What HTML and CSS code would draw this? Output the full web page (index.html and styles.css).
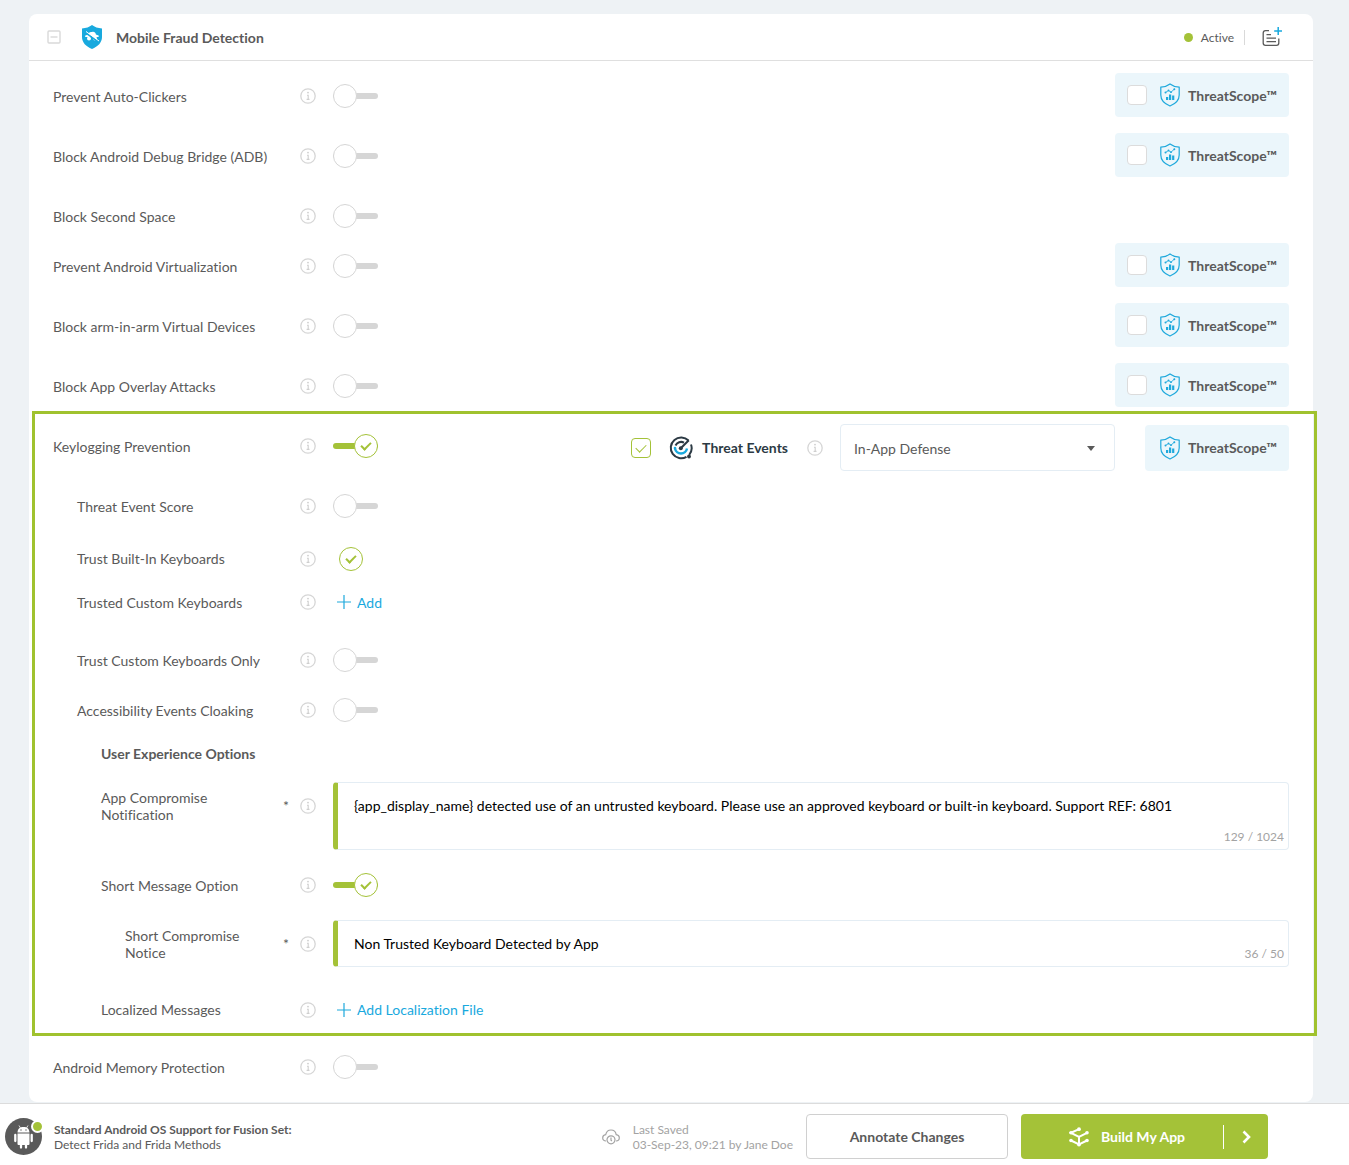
FILE: index.html
```html
<!DOCTYPE html>
<html lang="en">
<head>
  <meta charset="UTF-8" />
  <meta name="viewport" content="width=device-width, initial-scale=1.0"/>
  <title>Mobile Fraud Detection</title>
  <link rel="stylesheet" href="styles.css">
</head>
<body>

<!-- shared icons -->
<svg class="sprite" aria-hidden="true">
  <symbol id="info" viewBox="0 0 16 16">
    <circle cx="8" cy="8" r="7.200" fill="none" stroke="#d6d6d6" stroke-width="1.3"/>
    <circle cx="8" cy="4.600" r="0.900" fill="#cfcfcf"/>
    <path d="M7 7.2h1.200v4M6.600 11.400h2.900" fill="none" stroke="#cfcfcf" stroke-width="1.1"/>
  </symbol>
  <symbol id="scope" viewBox="0 0 20 24">
    <path d="M10 1C7.600 2.900 4.400 4 .8 4.200V12c0 5.200 3.800 8.800 9.200 11 5.400-2.200 9.200-5.800 9.200-11V4.200C15.600 4 12.400 2.900 10 1z" fill="none" stroke="#1fa9dc" stroke-width="1.200"/>
    <path d="M5.500 9.500l3-2 2.500 1.700 3.500-3.200" fill="none" stroke="#1fa9dc" stroke-width="0.900"/>
    <circle cx="5.500" cy="9.500" r="1" fill="#1fa9dc"/><circle cx="8.500" cy="7.500" r="0.900" fill="#1fa9dc"/><circle cx="11" cy="9.200" r="0.900" fill="#1fa9dc"/><circle cx="14.300" cy="6.300" r="1" fill="#1fa9dc"/>
    <path d="M6 14h2.200v3H6zM9 11.500h2.200V17H9zM12.100 12.500h2.200V17h-2.200z" fill="#1fa9dc"/>
  </symbol>
  <symbol id="plus" viewBox="0 0 14 14">
    <path d="M7 0v14M0 7h14" stroke="#1fa9dc" stroke-width="1.200"/>
  </symbol>
</svg>

<main class="card">
  <header class="card-header">
    <button class="icon-btn" aria-label="Collapse">
      <svg width="14" height="14" viewBox="0 0 14 14" fill="none" stroke="#d9d9d9" stroke-width="1.4"><rect x="1" y="1" width="12" height="12" rx="1"/><path d="M3.500 7h7"/></svg>
    </button>
    <svg class="shield" width="22" height="24" viewBox="0 0 22 24">
      <path d="M11 0C8.500 2 5 3.200 1 3.500V12c0 5.500 4 9.500 10 12 6-2.500 10-6.500 10-12V3.500C17 3.200 13.500 2 11 0z" fill="#18a9de"/>
      <path d="M7.200 9.500C7.500 7.500 9 6.600 11 7c2-.5 3.600.3 3.900 2.400l2.600 1.200c.8.500.4 1.200-.5 1.400H5c-1.300-.2-1.400-1-.5-1.500z" fill="#fff"/>
      <circle cx="8" cy="13.600" r="2" fill="#fff"/><circle cx="14" cy="13.600" r="2" fill="#fff"/>
      <path d="M4.500 7.500l13 9.500" stroke="#18a9de" stroke-width="1.800"/>
      <path d="M5 6.500l13 9.500" stroke="#fff" stroke-width="1"/>
    </svg>
    <h1>Mobile Fraud Detection</h1>
    <span class="status">Active</span>
    <button class="icon-btn note-btn" aria-label="Add note">
      <svg width="20" height="20" viewBox="0 0 20 20" fill="none" stroke="#5a5a5a" stroke-width="1.300">
        <path d="M7 3.700H3.500Q1.200 3.700 1.200 6v10q0 2.300 2.300 2.300h11q2.300 0 2.300-2.300v-4.500M4.500 7.600h4.500M4.500 11.200h9.500M4.500 14.700h9.500"/>
        <path d="M16.200 0v8M12.200 4h8" stroke="#18a9de" stroke-width="1.500"/>
      </svg>
    </button>
  </header>

  <div class="rows">
    <div class="row">
      <div class="name"><label for="clickers">Prevent Auto-Clickers</label></div>
      <svg class="info"><use href="#info"/></svg>
      <input type="checkbox" class="toggle" id="clickers">
      <label class="scope"><input type="checkbox" class="tick"><svg><use href="#scope"/></svg>ThreatScope™</label>
    </div>
    <div class="row">
      <div class="name"><label for="adb">Block Android Debug Bridge (ADB)</label></div>
      <svg class="info"><use href="#info"/></svg>
      <input type="checkbox" class="toggle" id="adb">
      <label class="scope"><input type="checkbox" class="tick"><svg><use href="#scope"/></svg>ThreatScope™</label>
    </div>
    <div class="row row-short">
      <div class="name"><label for="space">Block Second Space</label></div>
      <svg class="info"><use href="#info"/></svg>
      <input type="checkbox" class="toggle" id="space">
    </div>
    <div class="row">
      <div class="name"><label for="virt">Prevent Android Virtualization</label></div>
      <svg class="info"><use href="#info"/></svg>
      <input type="checkbox" class="toggle" id="virt">
      <label class="scope"><input type="checkbox" class="tick"><svg><use href="#scope"/></svg>ThreatScope™</label>
    </div>
    <div class="row">
      <div class="name"><label for="arm">Block arm-in-arm Virtual Devices</label></div>
      <svg class="info"><use href="#info"/></svg>
      <input type="checkbox" class="toggle" id="arm">
      <label class="scope"><input type="checkbox" class="tick"><svg><use href="#scope"/></svg>ThreatScope™</label>
    </div>
    <div class="row">
      <div class="name"><label for="overlay">Block App Overlay Attacks</label></div>
      <svg class="info"><use href="#info"/></svg>
      <input type="checkbox" class="toggle" id="overlay">
      <label class="scope"><input type="checkbox" class="tick"><svg><use href="#scope"/></svg>ThreatScope™</label>
    </div>

    <section class="highlight">
      <div class="row">
        <div class="name"><label for="keylog">Keylogging Prevention</label></div>
        <svg class="info"><use href="#info"/></svg>
        <input type="checkbox" class="toggle" id="keylog" checked>
        <div class="events">
          <input type="checkbox" class="tick" id="events" checked>
          <svg class="radar" width="24" height="24" viewBox="0 0 24 24" fill="none" stroke="#2c3a44" stroke-width="2">
            <path d="M19.500 4.500A10.400 10.400 0 1 0 17.500 20.800"/>
            <path d="M22 8.500a10.400 10.400 0 0 1-1.800 10.300"/>
            <path d="M6.500 9.500A6.200 6.200 0 0 1 15 6.600M11.500 12.500l8.300-8.300"/>
            <path d="M6 12.500a6.100 6.100 0 0 0 12 0" stroke="#18a9de" stroke-width="2.400"/>
            <circle cx="11.800" cy="12.200" r="2" fill="#2c3a44" stroke="none"/>
            <circle cx="6" cy="12" r="1.300" fill="#18a9de" stroke="none"/>
            <circle cx="20" cy="20.500" r="1.900" fill="#2c3a44" stroke="none"/>
          </svg>
          <label class="events-label" for="events">Threat Events</label>
          <svg class="info"><use href="#info"/></svg>
          <div class="select">
            <select aria-label="Threat Events mode"><option>In-App Defense</option></select>
            <svg width="8" height="5" viewBox="0 0 8 5"><path d="M0 0h8L4 5z" fill="#5a5a5a"/></svg>
          </div>
          <div class="scope scope-plain"><svg><use href="#scope"/></svg>ThreatScope™</div>
        </div>
      </div>
      <div class="row level-1">
        <div class="name"><label for="score">Threat Event Score</label></div>
        <svg class="info"><use href="#info"/></svg>
        <input type="checkbox" class="toggle" id="score">
      </div>
      <div class="row row-builtin level-1">
        <div class="name"><label for="builtin">Trust Built-In Keyboards</label></div>
        <svg class="info"><use href="#info"/></svg>
        <input type="checkbox" class="round" id="builtin" checked>
      </div>
      <div class="row row-add level-1">
        <div class="name">Trusted Custom Keyboards</div>
        <svg class="info"><use href="#info"/></svg>
        <button class="add"><svg><use href="#plus"/></svg>Add</button>
      </div>
      <div class="row row-medium level-1">
        <div class="name"><label for="custom">Trust Custom Keyboards Only</label></div>
        <svg class="info"><use href="#info"/></svg>
        <input type="checkbox" class="toggle" id="custom">
      </div>
      <div class="row row-medium level-1">
        <div class="name"><label for="cloak">Accessibility Events Cloaking</label></div>
        <svg class="info"><use href="#info"/></svg>
        <input type="checkbox" class="toggle" id="cloak">
      </div>
      <h2>User Experience Options</h2>
      <div class="row row-field level-2">
        <div class="name required"><label for="notification">App Compromise Notification</label><span>*</span></div>
        <svg class="info"><use href="#info"/></svg>
        <div class="field">
          <textarea id="notification">{app_display_name} detected use of an untrusted keyboard. Please use an approved keyboard or built-in keyboard. Support REF: 6801</textarea>
          <span class="count">129 / 1024</span>
        </div>
      </div>
      <div class="row row-medium level-2">
        <div class="name"><label for="short">Short Message Option</label></div>
        <svg class="info"><use href="#info"/></svg>
        <input type="checkbox" class="toggle" id="short" checked>
      </div>
      <div class="row row-field level-3">
        <div class="name required"><label for="notice">Short Compromise Notice</label><span>*</span></div>
        <svg class="info"><use href="#info"/></svg>
        <div class="field">
          <input type="text" id="notice" value="Non Trusted Keyboard Detected by App">
          <span class="count">36 / 50</span>
        </div>
      </div>
      <div class="row row-last level-2">
        <div class="name">Localized Messages</div>
        <svg class="info"><use href="#info"/></svg>
        <button class="add"><svg><use href="#plus"/></svg>Add Localization File</button>
      </div>
    </section>

    <div class="row row-medium">
      <div class="name"><label for="memory">Android Memory Protection</label></div>
      <svg class="info"><use href="#info"/></svg>
      <input type="checkbox" class="toggle" id="memory">
    </div>
  </div>
</main>

<footer>
  <div class="avatar">
    <svg width="37" height="37" viewBox="0 0 37 37">
      <circle cx="18.500" cy="18.500" r="18.500" fill="#5a5a5a"/>
      <path d="M12.500 14.500c.2-3.800 2.500-5.500 6-5.500s5.800 1.700 6 5.500zM12.500 15.500h12v10.500q0 1-1 1h-10q-1 0-1-1z" fill="#fff"/>
      <path d="M10.300 17v6M26.700 17v6M16 26v3.500M21 26v3.500" stroke="#fff" stroke-width="2.300" stroke-linecap="round"/>
      <path d="M14 7.500l1.500 2.500M23 7.500L21.500 10" stroke="#fff" stroke-width="0.800"/>
      <circle cx="16" cy="12" r="0.700" fill="#5a5a5a"/><circle cx="21" cy="12" r="0.700" fill="#5a5a5a"/>
    </svg>
    <span class="online"></span>
  </div>
  <p class="set"><strong>Standard Android OS Support for Fusion Set:</strong><br>Detect Frida and Frida Methods</p>
  <svg class="cloud" width="18" height="16" viewBox="0 0 18 16" fill="none" stroke="#a3a3a3" stroke-width="1.200">
    <path d="M4 12C2 12 .7 10.700.7 8.900S2 5.900 3.700 5.700C4.300 2.800 6.300 1 9 1s4.700 1.800 5.200 4.600c1.900.2 3.100 1.500 3.100 3.200S16 12 14 12"/>
    <circle cx="9" cy="10.800" r="4"/><path d="M9 8.600v2.600l.9.800"/>
  </svg>
  <p class="saved">Last Saved<br>03-Sep-23, 09:21 by Jane Doe</p>
  <button class="annotate">Annotate Changes</button>
  <button class="build">
    <svg width="20" height="20" viewBox="0 0 20 20" fill="none" stroke="#fff" stroke-width="2">
      <path d="M10 2.200L2 5.800l8 4 8-4M10 9.800V18M2 13.500l8 4 8-4"/>
      <g fill="#fff" stroke="none"><circle cx="10" cy="2.200" r="1.900"/><circle cx="2" cy="5.800" r="1.800"/><circle cx="18" cy="5.800" r="1.800"/><circle cx="2" cy="13.500" r="1.800"/><circle cx="18" cy="13.500" r="1.800"/><circle cx="10" cy="17.500" r="2"/></g>
    </svg>
    <span class="build-text">Build My App</span>
    <span class="build-arrow"><svg width="9" height="14" viewBox="0 0 9 14" fill="none" stroke="#fff" stroke-width="2.600"><path d="M1.500 1.500L7 7l-5.500 5.500"/></svg></span>
  </button>
</footer>

</body>
</html>
```
FILE: styles.css
```css
*,
*::before,
*::after {
  box-sizing: border-box;
}

body {
  margin: 0;
  font-family: Lato, 'Open Sans', sans-serif;
  font-size: 14px;
  line-height: 17px;
  font-variant-ligatures: no-common-ligatures;
  background: #eef2f5;
  color: #5a5a5a;
}

button,
input,
select,
textarea {
  font: inherit;
  margin: 0;
}

button {
  cursor: pointer;
}

svg {
  display: block;
  flex: none;
}

.sprite {
  position: absolute;
  width: 0;
  height: 0;
}

.card {
  margin: 14px 36px 1px 29px;
  background: #fff;
  border-radius: 8px;
}

.card-header {
  display: flex;
  align-items: center;
  height: 47px;
  padding: 0 31px 0 18px;
  border-bottom: 1px solid #dfdfdf;
}

.icon-btn {
  padding: 0;
  border: none;
  background: none;
}

.shield {
  margin: 0 13px 0 20px;
}

h1,
h2 {
  margin: 0;
  font-size: 14px;
  font-weight: bold;
}

.status {
  display: flex;
  align-items: center;
  gap: 8px;
  margin-left: auto;
  padding-right: 10px;
  border-right: 1px solid #d9d9d9;
  font-size: 12px;
  line-height: 15px;
}

.status::before {
  content: "";
  width: 9px;
  height: 9px;
  border-radius: 50%;
  background: #a4c238;
}

.note-btn {
  margin-left: 17px;
}

.rows {
  padding: 5px 0 10px;
}

.row {
  display: flex;
  align-items: center;
  min-height: 60px;
  padding: 0 24px;
}

.row-short {
  min-height: 50px;
  padding-top: 10px;
}

.row-medium {
  min-height: 50px;
}

.row-builtin {
  min-height: 45px;
}

.row-add {
  min-height: 42px;
  margin-bottom: 12px;
}

.row-field {
  align-items: flex-start;
  padding-top: 10px;
  padding-bottom: 10px;
}

.row-last {
  min-height: 65px;
}

.name {
  flex: none;
  width: 247px;
}

.level-1 .name {
  padding-left: 24px;
}

.level-2 .name {
  padding-left: 48px;
}

.level-3 .name {
  padding-left: 72px;
}

.required {
  display: flex;
  justify-content: space-between;
  align-items: center;
  min-height: 47px;
  padding-right: 11px;
}

.required label {
  max-width: 140px;
}

.info {
  width: 16px;
  height: 16px;
  margin-right: 17px;
}

.row-field .info {
  margin-top: 16px;
}

/* on / off switch: the input is the track, ::before the knob */
.toggle {
  appearance: none;
  position: relative;
  width: 45px;
  height: 6px;
  margin-bottom: 1px;
  border-radius: 3px;
  background: #d6d6d6;
  cursor: pointer;
}

.toggle::before {
  content: "";
  position: absolute;
  left: 0;
  top: -9px;
  width: 24px;
  height: 24px;
  border: 1px solid #d6d6d6;
  border-radius: 50%;
  background: #fff;
}

.toggle:checked {
  background: #a4c238;
}

.toggle:checked::before {
  left: 21px;
  border-color: #a4c238;
}

.toggle:checked::after,
.round:checked::after,
.tick:checked::after {
  content: "";
  position: absolute;
  width: 10px;
  height: 6px;
  border: solid #a4c238;
  border-width: 0 0 2px 2px;
  transform: rotate(-45deg);
}

.toggle:checked::after {
  left: 28px;
  top: -1px;
}

.round {
  appearance: none;
  position: relative;
  width: 24px;
  height: 24px;
  margin-left: 6px;
  border: 1px solid #a4c238;
  border-radius: 50%;
}

.round:checked::after {
  left: 6px;
  top: 7px;
}

.tick {
  appearance: none;
  position: relative;
  width: 20px;
  height: 20px;
  border: 1px solid #dcdcdc;
  border-radius: 4px;
  background: #fff;
}

.tick:checked {
  border-color: #a4c238;
}

.tick:checked::after {
  left: 4px;
  top: 5px;
  border-width: 0 0 1px 1px;
}

.scope {
  display: flex;
  align-items: center;
  width: 174px;
  height: 44px;
  margin-left: auto;
  margin-bottom: 2px;
  padding-left: 12px;
  border-radius: 4px;
  background: #ebf6fb;
  font-weight: bold;
}

.scope svg {
  width: 20px;
  height: 24px;
  margin: 0 8px 0 13px;
}

.scope-plain {
  width: 144px;
  height: 46px;
  margin-left: 30px;
  margin-bottom: 0;
  padding-left: 2px;
}

.highlight {
  position: relative;
}

.highlight::after {
  content: "";
  position: absolute;
  inset: -5px -4px 6px 3px;
  border: 3px solid #a0c22e;
  pointer-events: none;
}

.events {
  display: flex;
  align-items: center;
  margin-left: auto;
  padding-top: 3px;
}

.radar {
  margin: 0 9px 0 18px;
}

.events-label {
  margin-right: 19px;
  font-weight: bold;
  color: #2c3a44;
}

.select {
  position: relative;
  width: 275px;
}

.select select {
  appearance: none;
  width: 100%;
  height: 47px;
  padding: 2px 13px 0;
  border: 1px solid #e4edf4;
  border-radius: 4px;
  background: #fff;
  color: #5a5a5a;
}

.select svg {
  position: absolute;
  right: 20px;
  top: 22px;
  pointer-events: none;
}

.add {
  display: flex;
  align-items: center;
  gap: 6px;
  padding: 0 4px;
  border: none;
  background: none;
  color: #18a9de;
}

.add svg {
  width: 14px;
  height: 14px;
}

h2 {
  padding: 0 72px;
  line-height: 37px;
}

.field {
  position: relative;
  flex: 1;
}

.field textarea,
.field input {
  display: block;
  width: 100%;
  height: 68px;
  padding: 14px 16px;
  border: 1px solid #e4edf4;
  border-left: 5px solid #a4c238;
  border-radius: 4px;
  background: #fff;
  color: #000;
  resize: none;
}

.field input {
  height: 47px;
}

.count {
  position: absolute;
  right: 5px;
  bottom: 5px;
  font-size: 12px;
  color: #a3a3a3;
}

footer {
  position: sticky;
  bottom: 0;
  display: flex;
  align-items: center;
  height: 62px;
  padding: 4px 81px 0 5px;
  border-top: 1px solid #dcdcdc;
  background: #fff;
  font-size: 12px;
  line-height: 15px;
}

footer p {
  margin: 0;
}

.avatar {
  position: relative;
  margin-right: 12px;
}

.online {
  position: absolute;
  right: -2px;
  top: 2px;
  width: 13px;
  height: 13px;
  border: 2px solid #fff;
  border-radius: 50%;
  background: #a4c238;
}

.cloud {
  margin: 0 13px 0 auto;
}

.saved {
  color: #a3a3a3;
}

.annotate,
.build {
  height: 45px;
  border-radius: 4px;
  font-size: 14px;
  font-weight: bold;
}

.annotate {
  width: 202px;
  margin: 0 13px;
  border: 1px solid #d0d0d0;
  background: #fff;
  color: #5a5a5a;
}

.build {
  display: flex;
  align-items: center;
  width: 247px;
  padding: 0 17px 0 48px;
  border: none;
  background: #a4c238;
  color: #fff;
}

.build-text {
  margin-left: 12px;
}

.build-arrow {
  display: flex;
  align-items: center;
  height: 24px;
  margin-left: auto;
  padding-left: 18px;
  border-left: 1px solid #fff;
}
```
